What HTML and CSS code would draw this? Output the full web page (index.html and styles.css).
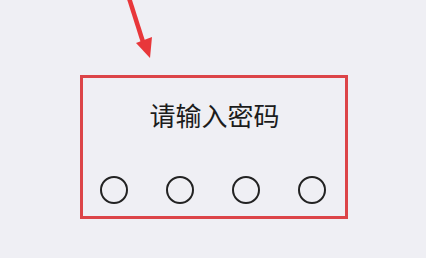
FILE: index.html
```html
<!DOCTYPE html>
<html lang="zh-CN">
<head>
<meta charset="utf-8">
<link rel="stylesheet" href="styles.css">
</head>
<body>
<svg class="arrow" width="60" height="64" viewBox="120 0 60 64" aria-hidden="true">
  <line x1="129" y1="-2" x2="143" y2="42" stroke="#e8373a" stroke-width="4.5"/>
  <polygon points="136,43 152,37 150,58" fill="#e8373a"/>
</svg>
<div class="panel">
  <div class="title">请输入密码</div>
  <div class="dots">
    <span class="dot"></span>
    <span class="dot"></span>
    <span class="dot"></span>
    <span class="dot"></span>
  </div>
</div>
</body>
</html>
```
FILE: styles.css
```css
html, body {
  margin: 0;
  padding: 0;
  background: #efeff4;
  width: 426px;
  height: 258px;
  overflow: hidden;
  font-family: "Noto Sans CJK SC", "Noto Sans", sans-serif;
}
body {
  padding-top: 75px;
  box-sizing: border-box;
  position: relative;
}
.arrow {
  position: absolute;
  left: 120px;
  top: 0;
}
.panel {
  margin-left: 80px;
  width: 268px;
  height: 144px;
  box-sizing: border-box;
  border: 3px solid #dc4448;
  padding-top: 22px;
}
.title {
  text-align: center;
  font-size: 26px;
  line-height: 30px;
  color: #1c1c1c;
  padding-left: 1px;
}
.dots {
  display: flex;
  gap: 38px;
  padding-left: 17px;
  margin-top: 46px;
}
.dot {
  width: 28px;
  height: 28px;
  box-sizing: border-box;
  border: 2px solid #222;
  border-radius: 50%;
}
```
